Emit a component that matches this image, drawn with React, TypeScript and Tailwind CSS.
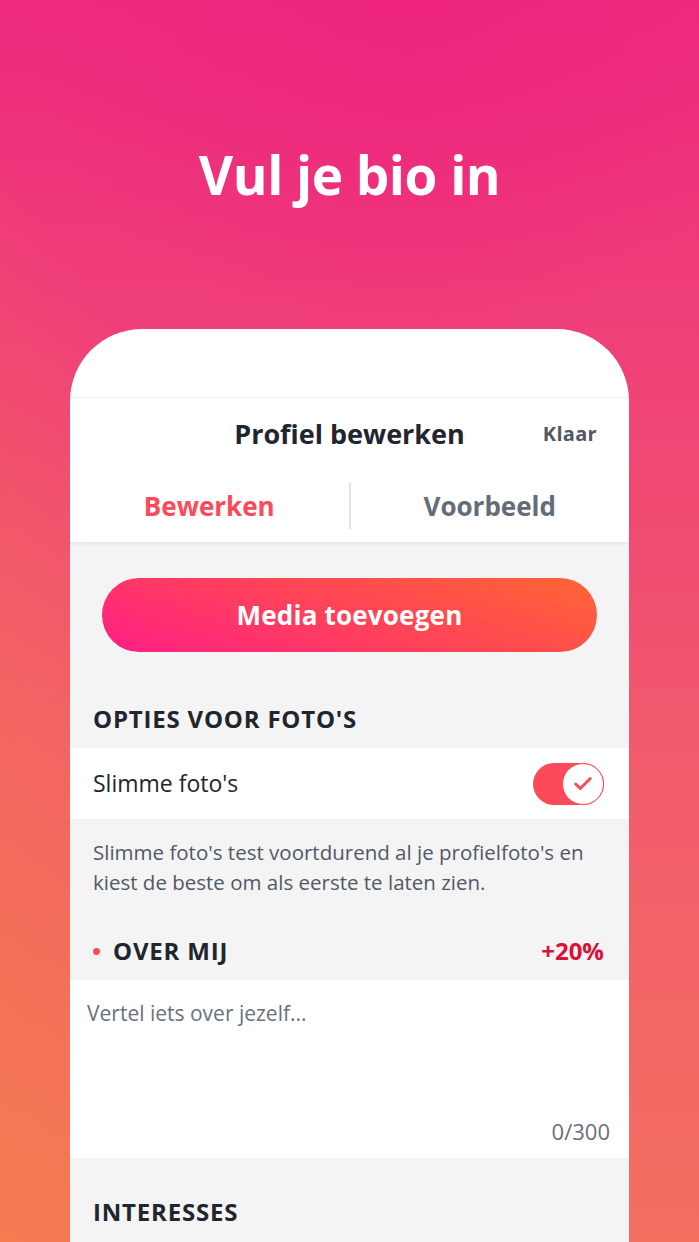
import { Check } from "lucide-react";

export default function App() {
  return (
    <div
      className="relative w-[699px] h-[1242px] overflow-hidden font-['Open_Sans',sans-serif]"
      style={{
        background:
          "radial-gradient(ellipse 55% 28% at 58% 0%, rgba(236,30,128,0.6) 0%, rgba(236,30,128,0) 100%), linear-gradient(to top right, rgba(247,132,68,0.55) 0%, rgba(247,132,68,0) 45%), linear-gradient(to bottom, #ee2a7e 0%, #ef3e78 25%, #f15a6c 60%, #f3705f 100%)",
      }}
    >
      <h1 className="pt-[140px] text-center text-[53px] leading-[70px] font-bold text-white tracking-[-0.5px]">
        Vul je bio in
      </h1>

      <div className="mx-[70px] mt-[119px] rounded-t-[72px] bg-white">
        <div className="h-[69px] border-b border-[#f1f1f1]" />

        {/* Header */}
        <div className="relative flex h-[72px] items-center justify-center">
          <span className="text-[27px] font-bold text-[#21262e]">Profiel bewerken</span>
          <span className="absolute right-[32px] top-[21px] text-[20px] font-bold text-[#505965] tracking-[0.3px]">Klaar</span>
        </div>

        {/* Tabs */}
        <div className="relative z-10 flex h-[72px] items-center shadow-[0_2px_3px_rgba(0,0,0,0.06)]">
          <div className="flex flex-1 justify-center text-[26px] font-bold text-[#fd4a5a]">Bewerken</div>
          <div className="h-[46px] w-[2px] bg-[#e4e4e6]" />
          <div className="flex flex-1 justify-center text-[26px] font-bold text-[#636c79]">Voorbeeld</div>
        </div>

        <div className="bg-[#f4f4f4] pt-[36px]">
          <div className="mx-[32px] flex h-[74px] items-center justify-center rounded-full bg-[linear-gradient(20deg,#ff1f85_0%,#ff4358_50%,#ff6633_100%)]">
            <span className="text-[26px] font-bold text-white tracking-[0.2px]">Media toevoegen</span>
          </div>

          <div className="px-[23px] pt-[52px] pb-[14px] text-[24px] leading-[30px] font-bold text-[#21262e] tracking-[0.8px]">
            OPTIES VOOR FOTO'S
          </div>

          <div className="flex h-[71px] items-center justify-between bg-white pl-[23px] pr-[25px]">
            <span className="text-[23px] text-[#21262e]">Slimme foto's</span>
            <div className="flex h-[42px] w-[71px] items-center justify-end rounded-full bg-[#fd4a5a]">
              <div className="flex h-[42px] w-[42px] items-center justify-center rounded-full border-[1.5px] border-[#fd4a5a] bg-white">
                <Check className="h-[22px] w-[22px] text-[#fd4a5a]" strokeWidth={3.2} />
              </div>
            </div>
          </div>

          <p className="px-[23px] pt-[18px] text-[20.5px] leading-[30px] text-[#505965]">
            Slimme foto's test voortdurend al je profielfoto's en kiest de beste om als eerste te laten zien.
          </p>

          <div className="flex items-center justify-between pl-[23px] pr-[25px] pt-[39px] pb-[14px]">
            <div className="flex items-center">
              <span className="mr-[13px] h-[7px] w-[7px] rounded-full bg-[#fd4a5a]" />
              <span className="text-[24px] leading-[30px] font-bold text-[#21262e] tracking-[0.8px]">OVER MIJ</span>
            </div>
            <span className="text-[24px] leading-[30px] font-bold text-[#db1238]">+20%</span>
          </div>

          <div className="flex h-[178px] flex-col justify-between bg-white pl-[17px] pr-[19px] pt-[18px] pb-[12px]">
            <span className="text-[21px] leading-[30px] text-[#69717d]">Vertel iets over jezelf...</span>
            <span className="self-end text-[22px] leading-[30px] text-[#69717d]">0/300</span>
          </div>

          <div className="px-[23px] pt-[39px] pb-[40px] text-[24px] leading-[30px] font-bold text-[#21262e] tracking-[0.8px]">
            INTERESSES
          </div>
        </div>
      </div>
    </div>
  );
}
